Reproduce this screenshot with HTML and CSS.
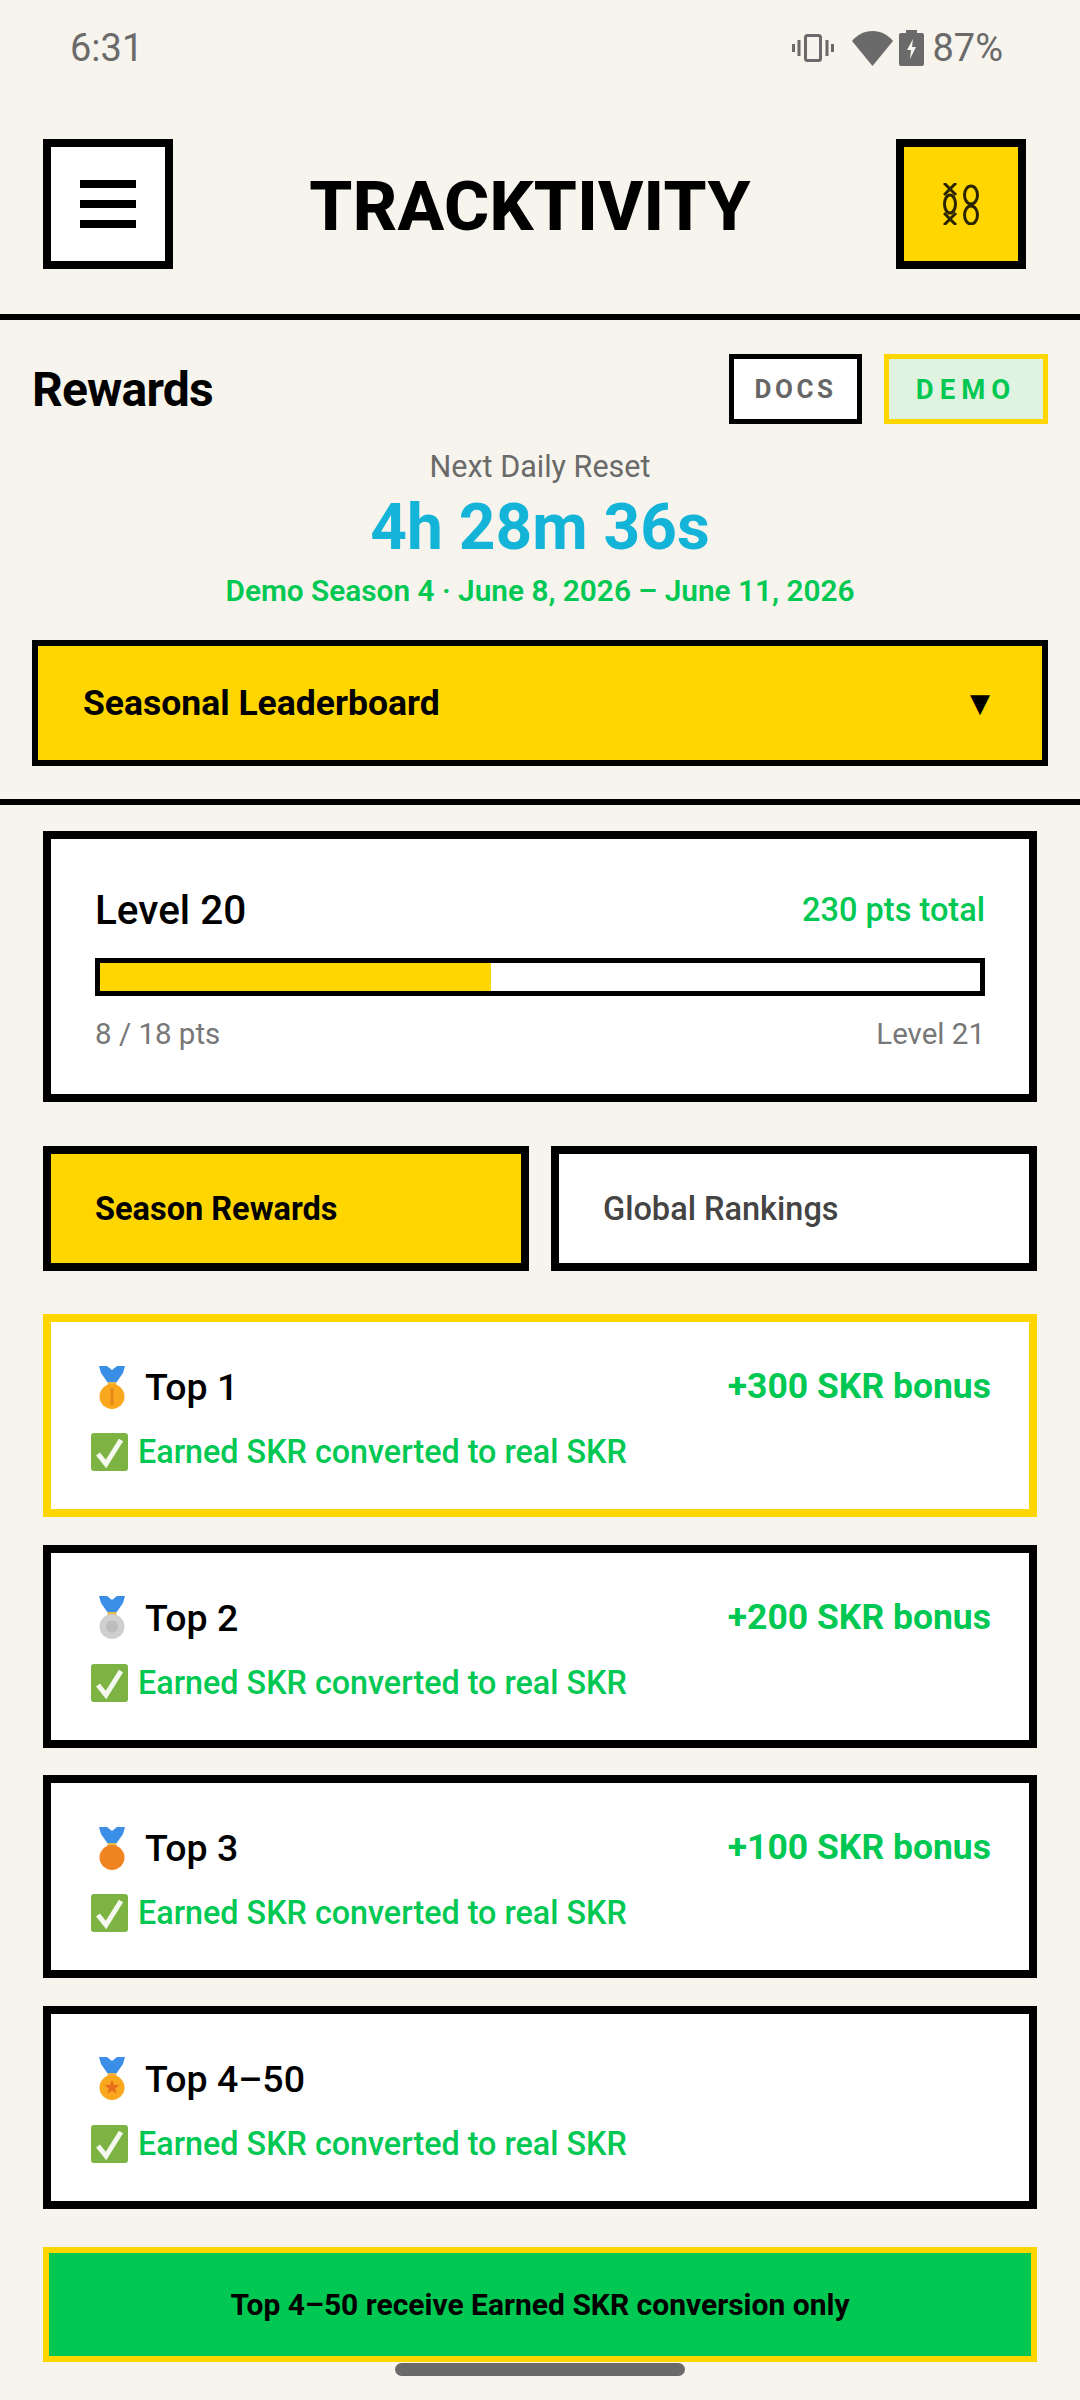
FILE: index.html
```html
<!DOCTYPE html>
<html lang="en">
<head>
    <meta charset="UTF-8">
    <meta name="viewport" content="width=device-width, initial-scale=1.0">
    <title>Tracktivity Rewards</title>
    <link rel="stylesheet" href="styles.css">
</head>
<body>
    <svg class="sprites" width="0" height="0">
        <symbol id="medal-ribbon" viewBox="0 0 26 43">
            <path d="M0 0h8l5 4 5-4h8l-2 7-7 10h-8L2 7z" fill="#3a8ee6"/>
            <path d="M9 16h8l1 4H8z" fill="#e8b84a"/>
        </symbol>
        <symbol id="check-box" viewBox="0 0 37 38">
            <rect width="37" height="38" rx="3" fill="#7cb342"/>
            <path d="M7 21l8 10L30 7" fill="none" stroke="#f4f8ee" stroke-width="5"/>
        </symbol>
    </svg>

    <div class="status-bar">
        <span class="status-time">6:31</span>
        <div class="status-icons">
            <svg class="icon-vibrate" width="42" height="28" viewBox="0 0 42 28">
                <rect x="13.5" y="1.5" width="15" height="25" rx="2" fill="none" stroke="#6a6a6a" stroke-width="3"/>
                <path d="M7 6v16M1.5 10v8M35 6v16M40.5 10v8" stroke="#6a6a6a" stroke-width="3"/>
            </svg>
            <svg class="icon-wifi" width="41" height="35" viewBox="0 0 41 35">
                <path d="M20.500 35L0 10C5 4 12 0 20.500 0S36 4 41 10z" fill="#6a6a6a"/>
            </svg>
            <svg class="icon-battery" width="25" height="36" viewBox="0 0 25 36">
                <path d="M7 3V0h11v3h5a2 2 0 0 1 2 2v29a2 2 0 0 1-2 2H2a2 2 0 0 1-2-2V5a2 2 0 0 1 2-2z" fill="#6a6a6a"/>
                <path d="M14 9l-6 11h4l-1 9 6-12h-4z" fill="#f7f4ed"/>
            </svg>
            <span class="status-battery">87%</span>
        </div>
    </div>

    <header class="app-header">
        <button class="icon-button">
            <span class="menu-line"></span>
            <span class="menu-line"></span>
            <span class="menu-line"></span>
        </button>
        <div class="app-title">TRACKTIVITY</div>
        <button class="icon-button yellow">
            <svg width="36" height="42" viewBox="0 0 36 42" fill="none" stroke="#2a2400" stroke-width="3">
                <path d="M1 0l12 12M13 0L1 12M1 42l12-12M13 42L1 30"/>
                <ellipse cx="7" cy="21" rx="5.500" ry="9"/>
                <ellipse cx="28" cy="12" rx="6.500" ry="9"/>
                <ellipse cx="28" cy="32" rx="6.500" ry="9"/>
            </svg>
        </button>
    </header>

    <section class="rewards-head">
        <div class="rewards-title-row">
            <h1>Rewards</h1>
            <div class="title-buttons">
                <span class="chip chip-docs">DOCS</span>
                <span class="chip chip-demo">DEMO</span>
            </div>
        </div>
        <div class="reset-label">Next Daily Reset</div>
        <div class="reset-timer">4h 28m 36s</div>
        <div class="season-dates">Demo Season 4 · June 8, 2026 – June 11, 2026</div>
        <div class="season-select">
            <span>Seasonal Leaderboard</span>
            <span class="select-arrow">▼</span>
        </div>
    </section>

    <main class="content">
        <div class="level-card">
            <div class="level-row">
                <span class="level-name">Level 20</span>
                <span class="level-total">230 pts total</span>
            </div>
            <div class="progress-track">
                <div class="progress-fill" style="width: 44.4%"></div>
            </div>
            <div class="progress-labels">
                <span>8 / 18 pts</span>
                <span>Level 21</span>
            </div>
        </div>

        <div class="tabs">
            <div class="tab active">Season Rewards</div>
            <div class="tab">Global Rankings</div>
        </div>

        <div class="reward-card first">
            <div class="reward-row">
                <div class="reward-rank">
                    <svg class="medal" width="26" height="43" viewBox="0 0 26 43"><use href="#medal-ribbon" width="26" height="43"/><circle cx="13" cy="30.500" r="12.500" fill="#f9a71e"/><path d="M13 22v17" stroke="#e8861a" stroke-width="3"/></svg>
                    Top 1
                </div>
                <div class="reward-bonus">+300 SKR bonus</div>
            </div>
            <div class="reward-note"><svg class="check" width="37" height="38"><use href="#check-box" width="37" height="38"/></svg>Earned SKR converted to real SKR</div>
        </div>

        <div class="reward-card">
            <div class="reward-row">
                <div class="reward-rank">
                    <svg class="medal" width="26" height="43" viewBox="0 0 26 43"><use href="#medal-ribbon" width="26" height="43"/><circle cx="13" cy="30.500" r="12.500" fill="#cfcfcf"/><circle cx="13" cy="30.500" r="6" fill="#bdbdbd"/></svg>
                    Top 2
                </div>
                <div class="reward-bonus">+200 SKR bonus</div>
            </div>
            <div class="reward-note"><svg class="check" width="37" height="38"><use href="#check-box" width="37" height="38"/></svg>Earned SKR converted to real SKR</div>
        </div>

        <div class="reward-card">
            <div class="reward-row">
                <div class="reward-rank">
                    <svg class="medal" width="26" height="43" viewBox="0 0 26 43"><use href="#medal-ribbon" width="26" height="43"/><circle cx="13" cy="30.500" r="12.500" fill="#ef8420"/></svg>
                    Top 3
                </div>
                <div class="reward-bonus">+100 SKR bonus</div>
            </div>
            <div class="reward-note"><svg class="check" width="37" height="38"><use href="#check-box" width="37" height="38"/></svg>Earned SKR converted to real SKR</div>
        </div>

        <div class="reward-card">
            <div class="reward-row">
                <div class="reward-rank">
                    <svg class="medal" width="26" height="43" viewBox="0 0 26 43"><use href="#medal-ribbon" width="26" height="43"/><circle cx="13" cy="30.500" r="12.500" fill="#f9a71e"/><path d="M13 23l2.200 5h5.300l-4.300 3.400 1.600 5.400-4.800-3.100-4.800 3.100 1.600-5.400-4.300-3.400h5.300z" fill="#e8701c"/></svg>
                    Top 4–50
                </div>
            </div>
            <div class="reward-note"><svg class="check" width="37" height="38"><use href="#check-box" width="37" height="38"/></svg>Earned SKR converted to real SKR</div>
        </div>

        <div class="notice">Top 4–50 receive Earned SKR conversion only</div>
    </main>

    <div class="home-indicator"></div>
</body>
</html>
```

FILE: styles.css
```css
* {
    margin: 0;
    padding: 0;
    box-sizing: border-box;
}

body {
    font-family: Roboto, "Liberation Sans", sans-serif;
    background-color: #f7f4ed;
    color: #000000;
    height: 2400px;
    overflow: hidden;
    position: relative;
}

.sprites {
    position: absolute;
}

/* status bar */
.status-bar {
    height: 92px;
    padding: 26px 77px 0 70px;
    display: flex;
    justify-content: space-between;
    align-items: flex-start;
    color: #6a6a6a;
    font-size: 38px;
}

.status-time {
    line-height: 44px;
}

.status-icons {
    display: flex;
    align-items: center;
    height: 44px;
}

.icon-vibrate {
    margin-right: 18px;
}

.icon-wifi {
    margin-right: 6px;
}

.icon-battery {
    margin-right: 8px;
}

/* top header */
.app-header {
    height: 228px;
    padding: 47px 54px 0 43px;
    display: flex;
    justify-content: space-between;
    align-items: flex-start;
    border-bottom: 6px solid #000000;
}

.icon-button {
    width: 130px;
    height: 130px;
    background: #ffffff;
    border: 8px solid #000000;
    display: flex;
    flex-direction: column;
    align-items: center;
    justify-content: center;
    gap: 12px;
}

.icon-button.yellow {
    background: #ffd600;
}

.menu-line {
    width: 56px;
    height: 8px;
    background: #000000;
}

.app-title {
    padding-right: 9px;
    font-size: 69px;
    font-weight: 800;
    line-height: 136px;
    letter-spacing: 0.3px;
}

/* rewards heading */
.rewards-head {
    height: 485px;
    padding: 34px 32px 0;
    border-bottom: 6px solid #000000;
}

.rewards-title-row {
    display: flex;
    justify-content: space-between;
    align-items: center;
    height: 70px;
}

.rewards-title-row h1 {
    font-size: 48px;
    font-weight: 700;
    letter-spacing: -0.8px;
}

.title-buttons {
    display: flex;
    gap: 22px;
}

.chip {
    height: 70px;
    display: flex;
    align-items: center;
    justify-content: center;
    font-weight: 700;
}

.chip-docs {
    width: 133px;
    background: #ffffff;
    border: 5px solid #000000;
    color: #666666;
    font-size: 26px;
    letter-spacing: 3.500px;
}

.chip-demo {
    width: 164px;
    background: #e0f3e0;
    border: 5px solid #ffd600;
    color: #00c853;
    font-size: 27.500px;
    letter-spacing: 6px;
}

.reset-label {
    margin-top: 25px;
    text-align: center;
    font-size: 30.500px;
    color: #6a6a6a;
    line-height: 36px;
}

.reset-timer {
    margin-top: 6px;
    text-align: center;
    font-size: 64px;
    font-weight: 700;
    color: #14b4d8;
    line-height: 74px;
}

.season-dates {
    margin-top: 7px;
    text-align: center;
    font-size: 29.800px;
    font-weight: 600;
    color: #00c853;
    line-height: 38px;
}

.season-select {
    margin-top: 30px;
    height: 126px;
    padding: 0 52px 0 45px;
    background: #ffd600;
    border: 6px solid #000000;
    display: flex;
    justify-content: space-between;
    align-items: center;
    font-size: 35.500px;
    font-weight: 700;
}

.select-arrow {
    font-family: "DejaVu Sans", sans-serif;
    font-size: 26px;
}

/* page content */
.content {
    padding: 26px 43px 0;
}

.level-card {
    height: 271px;
    padding: 48px 44px 0;
    background: #ffffff;
    border: 8px solid #000000;
}

.level-row {
    display: flex;
    justify-content: space-between;
    align-items: center;
    height: 46px;
}

.level-name {
    font-size: 40.500px;
    font-weight: 500;
}

.level-total {
    font-size: 32.500px;
    font-weight: 500;
    color: #00c853;
}

.progress-track {
    margin-top: 25px;
    height: 38px;
    background: #ffffff;
    border: 5px solid #000000;
}

.progress-fill {
    height: 100%;
    background: #ffd600;
}

.progress-labels {
    margin-top: 20px;
    display: flex;
    justify-content: space-between;
    font-size: 29.500px;
    line-height: 36px;
    color: #777777;
}

.tabs {
    margin-top: 44px;
    display: grid;
    grid-template-columns: 1fr 1fr;
    gap: 22px;
}

.tab {
    height: 125px;
    padding-left: 44px;
    background: #ffffff;
    border: 8px solid #000000;
    display: flex;
    align-items: center;
    font-size: 32.500px;
    font-weight: 500;
    color: #444444;
}

.tab.active {
    background: #ffd600;
    color: #000000;
    font-weight: 700;
}

.reward-card {
    margin-top: 27.500px;
    height: 203px;
    padding: 37px 38px 0 40px;
    background: #ffffff;
    border: 8px solid #000000;
}

.reward-card.first {
    margin-top: 43px;
    border-color: #ffd600;
}

.reward-row {
    display: flex;
    justify-content: space-between;
    align-items: center;
    height: 56px;
}

.reward-rank {
    display: flex;
    align-items: center;
    gap: 20px;
    font-size: 37.500px;
    font-weight: 500;
}

.medal {
    margin-left: 8px;
    display: block;
}

.reward-bonus {
    margin-top: -2px;
    font-size: 35.500px;
    font-weight: 700;
    color: #00c853;
}

.reward-note {
    margin-top: 18px;
    display: flex;
    align-items: center;
    gap: 10px;
    font-size: 32.300px;
    font-weight: 500;
    color: #00c853;
}

.notice {
    margin-top: 38px;
    height: 115px;
    background: #00c853;
    border: 6px solid #ffd600;
    display: flex;
    align-items: center;
    justify-content: center;
    font-size: 30px;
    font-weight: 700;
}

.home-indicator {
    position: absolute;
    left: 395px;
    top: 2363px;
    width: 290px;
    height: 13px;
    border-radius: 7px;
    background: #6a6a6a;
}
```
